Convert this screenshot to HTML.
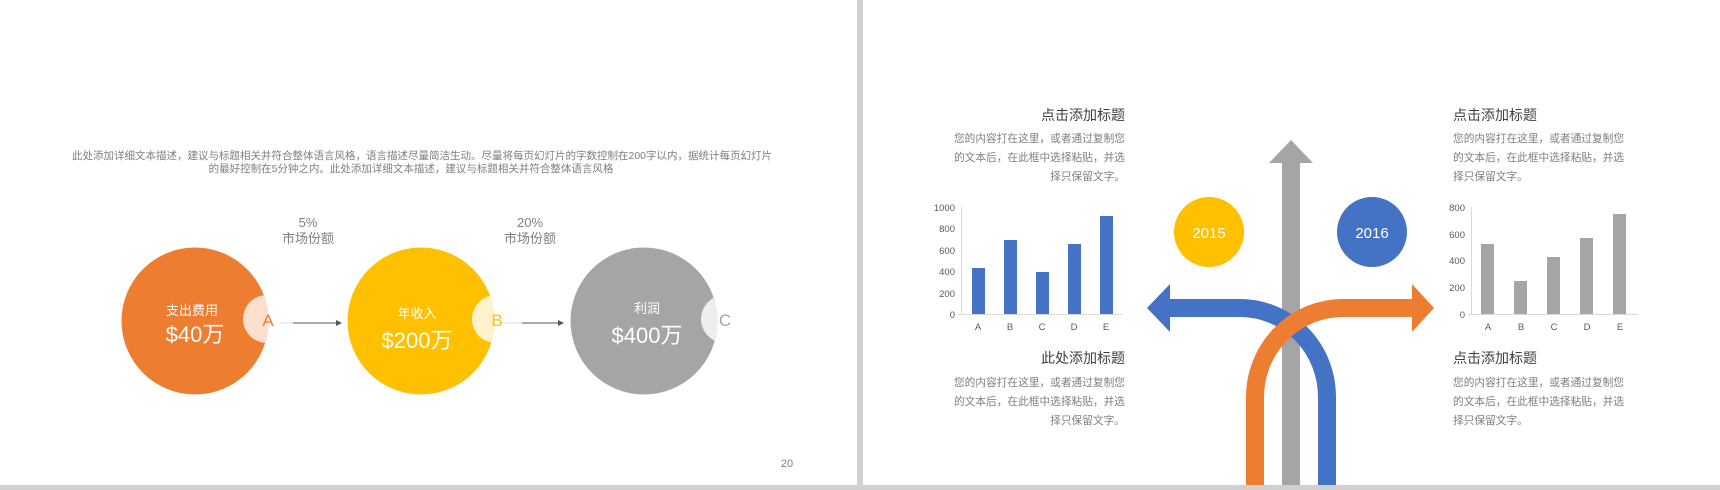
<!DOCTYPE html>
<html><head><meta charset="utf-8"><style>
html,body{margin:0;padding:0;background:#fff;}
svg{display:block;}
text{font-family:"Liberation Sans","Noto Sans CJK SC",sans-serif;}
</style></head><body>
<svg width="1720" height="490" viewBox="0 0 1720 490" xmlns="http://www.w3.org/2000/svg">
<defs>
<clipPath id="c1"><circle cx="195" cy="321" r="73.5"/></clipPath>
<clipPath id="c2"><circle cx="421" cy="321" r="73.5"/></clipPath>
<clipPath id="c3"><circle cx="644" cy="321" r="73.5"/></clipPath>
</defs>
<rect width="1720" height="490" fill="#fff"/>
<rect x="857" y="0" width="6" height="490" fill="#d0d0d0"/>
<rect x="0" y="485" width="1720" height="5" fill="#d0d0d0"/>

<!-- left slide -->
<g font-size="10.5" fill="#7f7f7f" text-anchor="middle">
<text x="422" y="159">此处添加详细文本描述，建议与标题相关并符合整体语言风格，语言描述尽量简洁生动。尽量将每页幻灯片的字数控制在200字以内，据统计每页幻灯片</text>
<text x="411" y="172">的最好控制在5分钟之内。此处添加详细文本描述，建议与标题相关并符合整体语言风格</text>
</g>
<g font-size="13" fill="#7f7f7f" text-anchor="middle">
<text x="308" y="227">5%</text><text x="308" y="243">市场份额</text>
<text x="530" y="227">20%</text><text x="530" y="243">市场份额</text>
</g>
<circle cx="195" cy="321" r="73.5" fill="#ed7d31"/>
<circle cx="267" cy="319" r="24" fill="#fbe0d0" clip-path="url(#c1)"/>
<circle cx="421" cy="321" r="73.5" fill="#ffc000"/>
<circle cx="496" cy="319" r="24" fill="#fff2cc" clip-path="url(#c2)"/>
<circle cx="644" cy="321" r="73.5" fill="#a5a5a5"/>
<circle cx="725" cy="319" r="24" fill="#ededed" clip-path="url(#c3)"/>
<g fill="#fff" text-anchor="middle">
<text x="192" y="315" font-size="13">支出费用</text>
<text x="195" y="342" font-size="22">$40万</text>
<text x="417" y="318" font-size="13">年收入</text>
<text x="417" y="348" font-size="22">$200万</text>
<text x="647" y="313" font-size="13">利润</text>
<text x="647" y="343" font-size="22">$400万</text>
</g>
<text x="268" y="326" font-size="17" fill="#ed7d31" text-anchor="middle">A</text>
<text x="497" y="326" font-size="17" fill="#ffc000" text-anchor="middle">B</text>
<text x="725" y="326" font-size="17" fill="#a5a5a5" text-anchor="middle">C</text>
<g stroke-width="1">
<line x1="280" y1="323" x2="293" y2="323" stroke="#ddd"/>
<line x1="293" y1="323" x2="337" y2="323" stroke="#555"/>
<line x1="503" y1="323" x2="522" y2="323" stroke="#ddd"/>
<line x1="522" y1="323" x2="559" y2="323" stroke="#555"/>
</g>
<polygon points="342,323 336,320 336,326" fill="#555"/>
<polygon points="564,323 558,320 558,326" fill="#555"/>
<text x="787" y="467" font-size="11" fill="#7f7f7f" text-anchor="middle">20</text>

<!-- right slide: arrows -->
<rect x="1282" y="162" width="18" height="323" fill="#a5a5a5"/>
<polygon points="1291,140 1313,163 1269,163" fill="#a5a5a5"/>
<circle cx="1209" cy="232" r="35" fill="#ffc000"/>
<circle cx="1372" cy="232" r="35" fill="#4472c4"/>
<text x="1209" y="238" font-size="15" fill="#fff" text-anchor="middle">2015</text>
<text x="1372" y="238" font-size="15" fill="#fff" text-anchor="middle">2016</text>
<path d="M1168 308 H1240 A87 89 0 0 1 1327 397 V485" fill="none" stroke="#4472c4" stroke-width="18"/>
<polygon points="1147,308 1170,284 1170,332" fill="#4472c4"/>
<path d="M1255 485 V397 A88 89 0 0 1 1343 308 H1414" fill="none" stroke="#ed7d31" stroke-width="18"/>
<polygon points="1434,308 1412,284 1412,332" fill="#ed7d31"/>

<!-- text blocks -->
<g fill="#404040" font-size="14">
<text x="1125" y="120" text-anchor="end">点击添加标题</text>
<text x="1125" y="363" text-anchor="end">此处添加标题</text>
<text x="1453" y="120">点击添加标题</text>
<text x="1453" y="363">点击添加标题</text>
</g>
<g fill="#7f7f7f" font-size="10.7">
<g text-anchor="end">
<text x="1125" y="142">您的内容打在这里，或者通过复制您</text>
<text x="1125" y="161">的文本后，在此框中选择粘贴，并选</text>
<text x="1125" y="180">择只保留文字。</text>
<text x="1125" y="386">您的内容打在这里，或者通过复制您</text>
<text x="1125" y="405">的文本后，在此框中选择粘贴，并选</text>
<text x="1125" y="424">择只保留文字。</text>
</g>
<text x="1453" y="142">您的内容打在这里，或者通过复制您</text>
<text x="1453" y="161">的文本后，在此框中选择粘贴，并选</text>
<text x="1453" y="180">择只保留文字。</text>
<text x="1453" y="386">您的内容打在这里，或者通过复制您</text>
<text x="1453" y="405">的文本后，在此框中选择粘贴，并选</text>
<text x="1453" y="424">择只保留文字。</text>
</g>

<!-- chart 1 -->
<g stroke="#d9d9d9" stroke-width="1">
<line x1="961.5" y1="207" x2="961.5" y2="314"/>
<line x1="958" y1="314.5" x2="1122" y2="314.5"/>
</g>
<g fill="#595959" font-size="9.5" text-anchor="end">
<text x="955" y="211">1000</text><text x="955" y="232">800</text><text x="955" y="254">600</text>
<text x="955" y="275">400</text><text x="955" y="297">200</text><text x="955" y="318">0</text>
</g>
<g fill="#4472c4">
<rect x="972" y="268" width="13" height="46"/>
<rect x="1004" y="240" width="13" height="74"/>
<rect x="1036" y="272" width="13" height="42"/>
<rect x="1068" y="244" width="13" height="70"/>
<rect x="1100" y="216" width="13" height="98"/>
</g>
<g fill="#595959" font-size="9.5" text-anchor="middle">
<text x="978" y="330">A</text><text x="1010" y="330">B</text><text x="1042" y="330">C</text><text x="1074" y="330">D</text><text x="1106" y="330">E</text>
</g>

<!-- chart 2 -->
<g stroke="#d9d9d9" stroke-width="1">
<line x1="1471.5" y1="207" x2="1471.5" y2="314"/>
<line x1="1468" y1="314.5" x2="1638" y2="314.5"/>
</g>
<g fill="#595959" font-size="9.5" text-anchor="end">
<text x="1465" y="211">800</text><text x="1465" y="238">600</text><text x="1465" y="264">400</text>
<text x="1465" y="291">200</text><text x="1465" y="318">0</text>
</g>
<g fill="#a5a5a5">
<rect x="1481" y="244" width="13" height="70"/>
<rect x="1514" y="281" width="13" height="33"/>
<rect x="1547" y="257" width="13" height="57"/>
<rect x="1580" y="238" width="13" height="76"/>
<rect x="1613" y="214" width="13" height="100"/>
</g>
<g fill="#595959" font-size="9.5" text-anchor="middle">
<text x="1488" y="330">A</text><text x="1521" y="330">B</text><text x="1554" y="330">C</text><text x="1587" y="330">D</text><text x="1620" y="330">E</text>
</g>
</svg>
</body></html>
